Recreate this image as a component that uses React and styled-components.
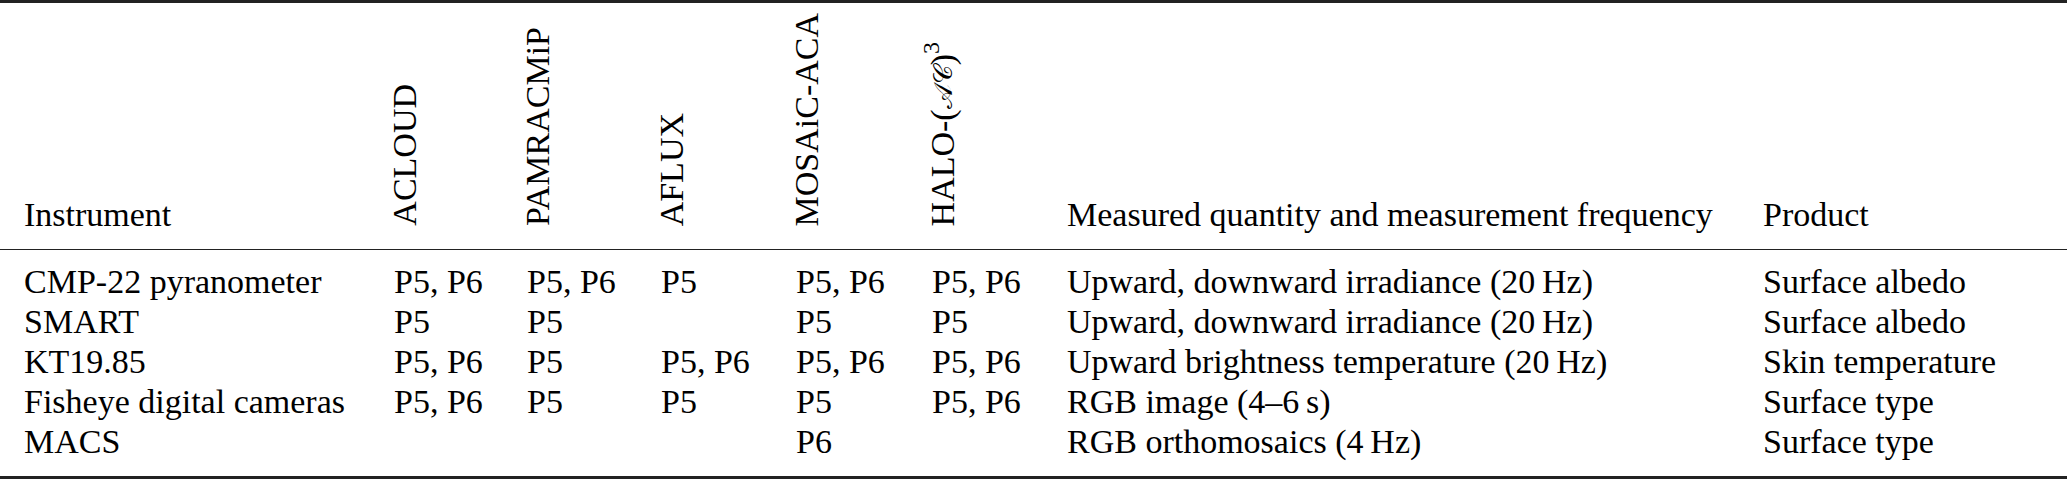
import styled, { createGlobalStyle } from "styled-components";

const GlobalStyle = createGlobalStyle`
  html, body {
    margin: 0;
    padding: 0;
    background: #fff;
  }
  body {
    font-family: "Liberation Serif", "Times New Roman", serif;
    color: #000;
  }
`;

const COLUMNS = "370px 133px 134px 135px 136px 135px 696px 1fr";

const Table = styled.div`
  width: 2067px;
  font-size: 34px;
  line-height: 40px;
`;

const Rule = styled.div`
  height: ${(p) => p.$weight}px;
  background: #222;
`;

const HeaderRow = styled.div`
  display: grid;
  grid-template-columns: ${COLUMNS};
  align-items: end;
  height: 246px;
  box-sizing: border-box;
  padding: 0 0 14px 24px;
`;

const Body = styled.div`
  padding: 12px 0 14px;
`;

const Row = styled.div`
  display: grid;
  grid-template-columns: ${COLUMNS};
  height: 40px;
  padding-left: 24px;
`;

const Cell = styled.div`
  white-space: nowrap;
`;

const RotatedHead = styled.div`
  justify-self: start;
  writing-mode: vertical-rl;
  transform: rotate(180deg);
  line-height: 34px;
  margin-left: -6px;
  margin-bottom: 9px;
  white-space: nowrap;
`;

// calligraphic A and C from the math alphabet block
const Cal = styled.span`
  font-family: "DejaVu Serif", "DejaVu Sans", serif;
  font-size: 26px;
`;

const Sup = styled.sup`
  font-size: 24px;
  line-height: 0;
`;

const campaigns = ["ACLOUD", "PAMRACMiP", "AFLUX", "MOSAiC-ACA"];

const rows = [
  ["CMP-22 pyranometer", "P5, P6", "P5, P6", "P5", "P5, P6", "P5, P6", "Upward, downward irradiance (20\u2009Hz)", "Surface albedo"],
  ["SMART", "P5", "P5", "", "P5", "P5", "Upward, downward irradiance (20\u2009Hz)", "Surface albedo"],
  ["KT19.85", "P5, P6", "P5", "P5, P6", "P5, P6", "P5, P6", "Upward brightness temperature (20\u2009Hz)", "Skin temperature"],
  ["Fisheye digital cameras", "P5, P6", "P5", "P5", "P5", "P5, P6", "RGB image (4–6\u2009s)", "Surface type"],
  ["MACS", "", "", "", "P6", "", "RGB orthomosaics (4\u2009Hz)", "Surface type"],
];

export default function App() {
  return (
    <>
      <GlobalStyle />
      <Table>
        <Rule $weight={3} />
        <HeaderRow>
          <Cell>Instrument</Cell>
          {campaigns.map((c) => (
            <RotatedHead key={c}>{c}</RotatedHead>
          ))}
          <RotatedHead>
            HALO-(<Cal>{"\u{1D49C}\u{1D49E}"}</Cal>)<Sup>3</Sup>
          </RotatedHead>
          <Cell>Measured quantity and measurement frequency</Cell>
          <Cell>Product</Cell>
        </HeaderRow>
        <Rule $weight={1} />
        <Body>
          {rows.map((r, i) => (
            <Row key={i}>
              {r.map((v, j) => (
                <Cell key={j}>{v}</Cell>
              ))}
            </Row>
          ))}
        </Body>
        <Rule $weight={3} />
      </Table>
    </>
  );
}
